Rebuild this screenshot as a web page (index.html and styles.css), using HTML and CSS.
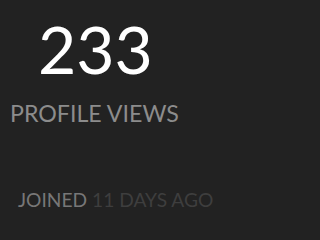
FILE: index.html
```html
<!DOCTYPE html>
<html>
<head>
<meta charset="utf-8">
<link rel="stylesheet" href="styles.css">
</head>
<body>
<div class="card">
  <div class="stat">
    <div class="count">233</div>
    <div class="label">PROFILE VIEWS</div>
  </div>
  <div class="joined">JOINED <span class="ago">11 DAYS AGO</span></div>
</div>
</body>
</html>
```
FILE: styles.css
```css
html, body {
  margin: 0;
  padding: 0;
  background: #222222;
  font-family: Lato, "Open Sans", sans-serif;
}
.card {
  width: 215px;
  height: 224px;
  overflow: hidden;
  display: flex;
  flex-direction: column;
}
.stat {
  padding-left: 10px;
  display: flex;
  flex-direction: column;
}
.count {
  color: #ffffff;
  font-size: 66px;
  line-height: 66px;
  margin-top: 16px;
  padding-left: 28px;
}
.label {
  color: #8c8c8c;
  font-size: 23.2px;
  line-height: 23px;
  margin-top: 20px;
}
.joined {
  margin-top: 65px;
  padding-left: 18px;
  color: #777777;
  font-size: 19.2px;
  line-height: 19px;
  white-space: nowrap;
}
.ago {
  color: #3e3e3e;
}
```
